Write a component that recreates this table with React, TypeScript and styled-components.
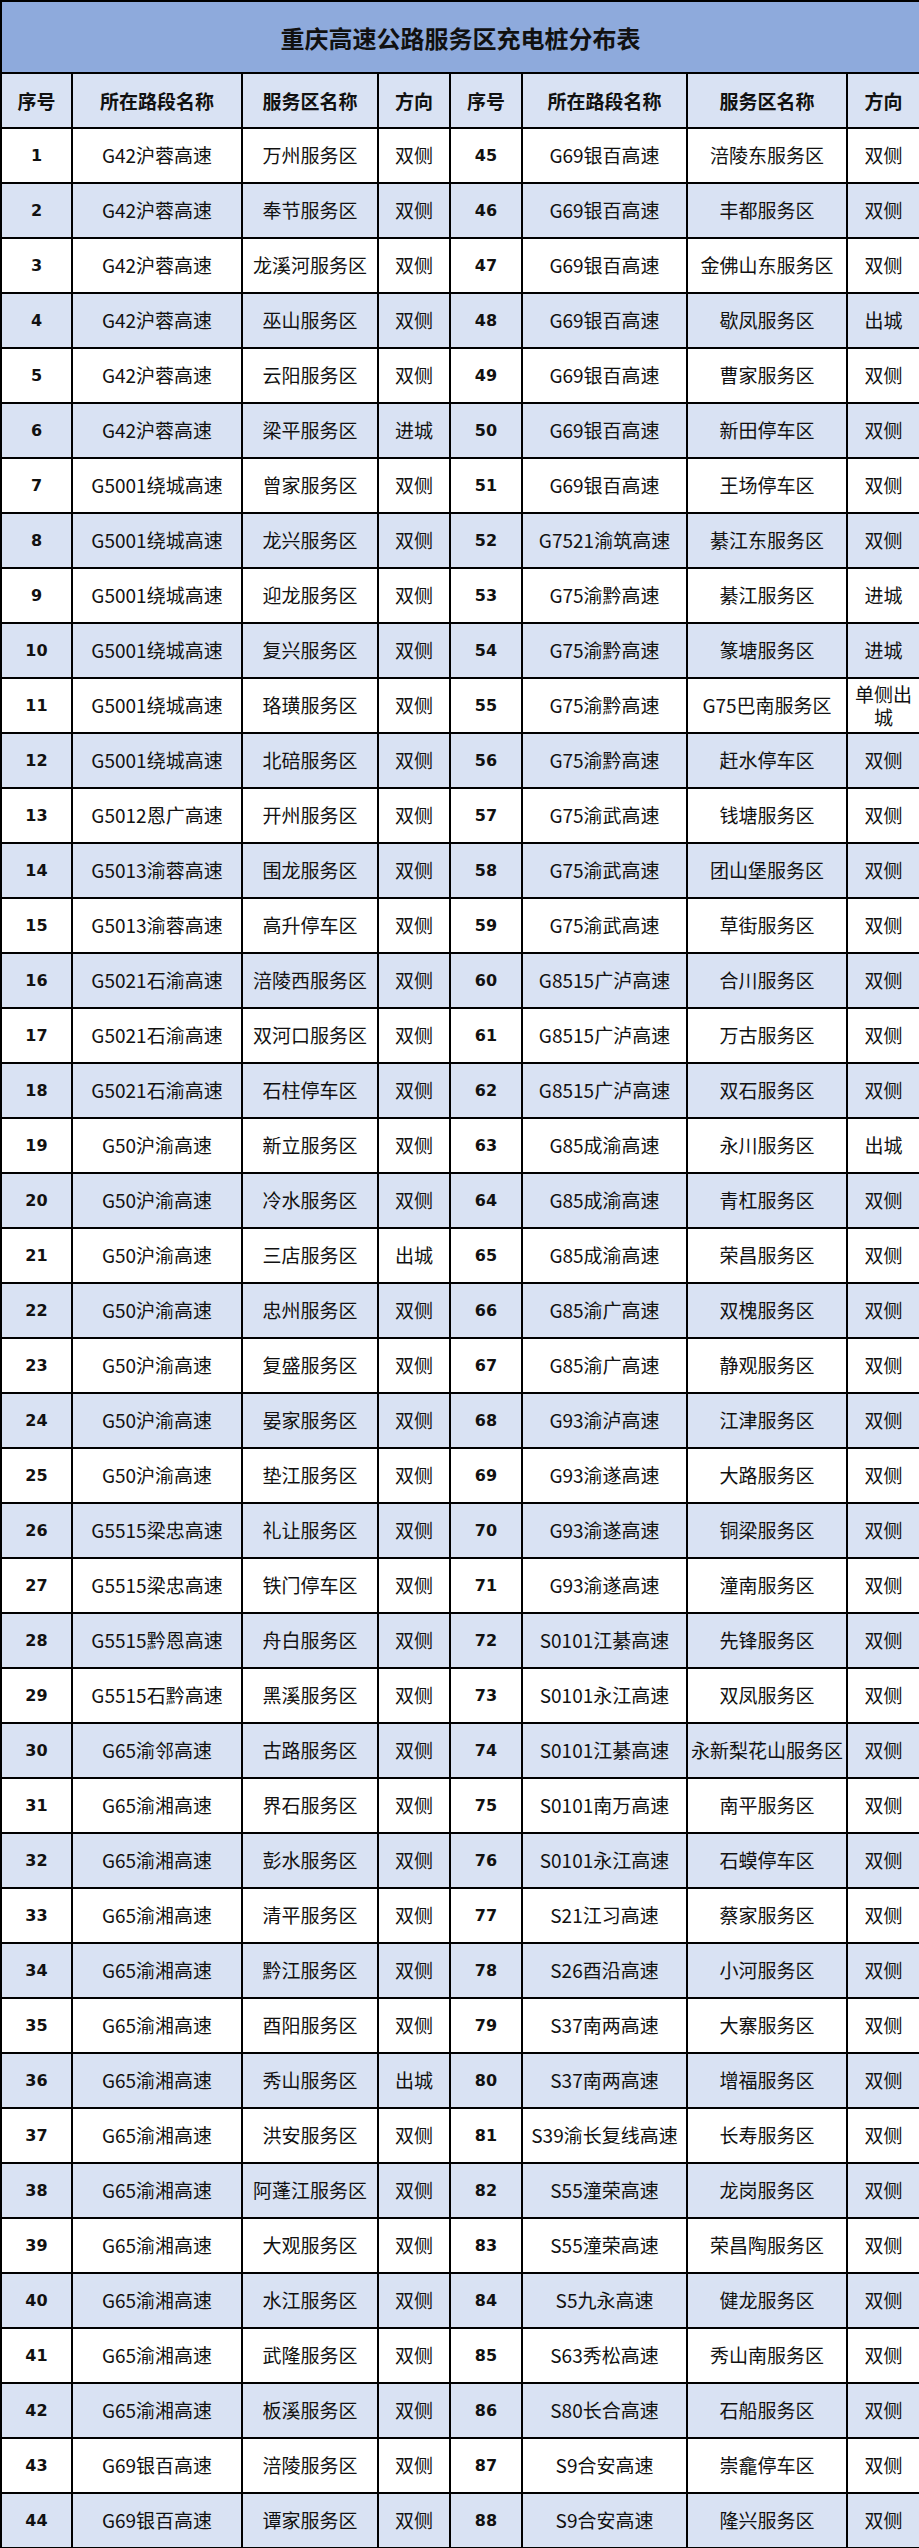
import React from 'react';
import styled, { createGlobalStyle } from 'styled-components';

type Row = [number, string, string, string];

const LEFT_ROWS: Row[] = [
  [1, 'G42沪蓉高速', '万州服务区', '双侧'],
  [2, 'G42沪蓉高速', '奉节服务区', '双侧'],
  [3, 'G42沪蓉高速', '龙溪河服务区', '双侧'],
  [4, 'G42沪蓉高速', '巫山服务区', '双侧'],
  [5, 'G42沪蓉高速', '云阳服务区', '双侧'],
  [6, 'G42沪蓉高速', '梁平服务区', '进城'],
  [7, 'G5001绕城高速', '曾家服务区', '双侧'],
  [8, 'G5001绕城高速', '龙兴服务区', '双侧'],
  [9, 'G5001绕城高速', '迎龙服务区', '双侧'],
  [10, 'G5001绕城高速', '复兴服务区', '双侧'],
  [11, 'G5001绕城高速', '珞璜服务区', '双侧'],
  [12, 'G5001绕城高速', '北碚服务区', '双侧'],
  [13, 'G5012恩广高速', '开州服务区', '双侧'],
  [14, 'G5013渝蓉高速', '围龙服务区', '双侧'],
  [15, 'G5013渝蓉高速', '高升停车区', '双侧'],
  [16, 'G5021石渝高速', '涪陵西服务区', '双侧'],
  [17, 'G5021石渝高速', '双河口服务区', '双侧'],
  [18, 'G5021石渝高速', '石柱停车区', '双侧'],
  [19, 'G50沪渝高速', '新立服务区', '双侧'],
  [20, 'G50沪渝高速', '冷水服务区', '双侧'],
  [21, 'G50沪渝高速', '三店服务区', '出城'],
  [22, 'G50沪渝高速', '忠州服务区', '双侧'],
  [23, 'G50沪渝高速', '复盛服务区', '双侧'],
  [24, 'G50沪渝高速', '晏家服务区', '双侧'],
  [25, 'G50沪渝高速', '垫江服务区', '双侧'],
  [26, 'G5515梁忠高速', '礼让服务区', '双侧'],
  [27, 'G5515梁忠高速', '铁门停车区', '双侧'],
  [28, 'G5515黔恩高速', '舟白服务区', '双侧'],
  [29, 'G5515石黔高速', '黑溪服务区', '双侧'],
  [30, 'G65渝邻高速', '古路服务区', '双侧'],
  [31, 'G65渝湘高速', '界石服务区', '双侧'],
  [32, 'G65渝湘高速', '彭水服务区', '双侧'],
  [33, 'G65渝湘高速', '清平服务区', '双侧'],
  [34, 'G65渝湘高速', '黔江服务区', '双侧'],
  [35, 'G65渝湘高速', '酉阳服务区', '双侧'],
  [36, 'G65渝湘高速', '秀山服务区', '出城'],
  [37, 'G65渝湘高速', '洪安服务区', '双侧'],
  [38, 'G65渝湘高速', '阿蓬江服务区', '双侧'],
  [39, 'G65渝湘高速', '大观服务区', '双侧'],
  [40, 'G65渝湘高速', '水江服务区', '双侧'],
  [41, 'G65渝湘高速', '武隆服务区', '双侧'],
  [42, 'G65渝湘高速', '板溪服务区', '双侧'],
  [43, 'G69银百高速', '涪陵服务区', '双侧'],
  [44, 'G69银百高速', '谭家服务区', '双侧'],
];

const RIGHT_ROWS: Row[] = [
  [45, 'G69银百高速', '涪陵东服务区', '双侧'],
  [46, 'G69银百高速', '丰都服务区', '双侧'],
  [47, 'G69银百高速', '金佛山东服务区', '双侧'],
  [48, 'G69银百高速', '歇凤服务区', '出城'],
  [49, 'G69银百高速', '曹家服务区', '双侧'],
  [50, 'G69银百高速', '新田停车区', '双侧'],
  [51, 'G69银百高速', '王场停车区', '双侧'],
  [52, 'G7521渝筑高速', '綦江东服务区', '双侧'],
  [53, 'G75渝黔高速', '綦江服务区', '进城'],
  [54, 'G75渝黔高速', '篆塘服务区', '进城'],
  [55, 'G75渝黔高速', 'G75巴南服务区', '单侧出城'],
  [56, 'G75渝黔高速', '赶水停车区', '双侧'],
  [57, 'G75渝武高速', '钱塘服务区', '双侧'],
  [58, 'G75渝武高速', '团山堡服务区', '双侧'],
  [59, 'G75渝武高速', '草街服务区', '双侧'],
  [60, 'G8515广泸高速', '合川服务区', '双侧'],
  [61, 'G8515广泸高速', '万古服务区', '双侧'],
  [62, 'G8515广泸高速', '双石服务区', '双侧'],
  [63, 'G85成渝高速', '永川服务区', '出城'],
  [64, 'G85成渝高速', '青杠服务区', '双侧'],
  [65, 'G85成渝高速', '荣昌服务区', '双侧'],
  [66, 'G85渝广高速', '双槐服务区', '双侧'],
  [67, 'G85渝广高速', '静观服务区', '双侧'],
  [68, 'G93渝泸高速', '江津服务区', '双侧'],
  [69, 'G93渝遂高速', '大路服务区', '双侧'],
  [70, 'G93渝遂高速', '铜梁服务区', '双侧'],
  [71, 'G93渝遂高速', '潼南服务区', '双侧'],
  [72, 'S0101江綦高速', '先锋服务区', '双侧'],
  [73, 'S0101永江高速', '双凤服务区', '双侧'],
  [74, 'S0101江綦高速', '永新梨花山服务区', '双侧'],
  [75, 'S0101南万高速', '南平服务区', '双侧'],
  [76, 'S0101永江高速', '石蟆停车区', '双侧'],
  [77, 'S21江习高速', '蔡家服务区', '双侧'],
  [78, 'S26酉沿高速', '小河服务区', '双侧'],
  [79, 'S37南两高速', '大寨服务区', '双侧'],
  [80, 'S37南两高速', '增福服务区', '双侧'],
  [81, 'S39渝长复线高速', '长寿服务区', '双侧'],
  [82, 'S55潼荣高速', '龙岗服务区', '双侧'],
  [83, 'S55潼荣高速', '荣昌陶服务区', '双侧'],
  [84, 'S5九永高速', '健龙服务区', '双侧'],
  [85, 'S63秀松高速', '秀山南服务区', '双侧'],
  [86, 'S80长合高速', '石船服务区', '双侧'],
  [87, 'S9合安高速', '崇龕停车区', '双侧'],
  [88, 'S9合安高速', '隆兴服务区', '双侧'],
];

const COLUMN_WIDTHS = [71, 170, 136, 72, 72, 165, 160, 73];
const HEADERS = ['序号', '所在路段名称', '服务区名称', '方向'];

const GlobalStyle = createGlobalStyle`
  body {
    margin: 0;
    background: #fff;
  }
`;

const Sheet = styled.table`
  width: 919px;
  table-layout: fixed;
  border-collapse: collapse;
  font-family: 'Noto Sans CJK SC', 'Noto Sans', sans-serif;
  color: #111;
`;

const TitleCell = styled.th`
  height: 70px;
  padding: 0;
  border: 2px solid #000;
  background: #8eaadc;
  font-size: 24px;
  font-weight: 700;
  text-align: center;
  vertical-align: middle;
`;

const BodyRow = styled.tr<{ $shaded: boolean }>`
  height: 55px;
  background: ${(props) => (props.$shaded ? '#d9e2f3' : '#fff')};
`;

const HeadCell = styled.th`
  padding: 0 2px;
  border: 2px solid #000;
  font-size: 19px;
  font-weight: 700;
  text-align: center;
  vertical-align: middle;
`;

const NumberCell = styled.td`
  padding: 0;
  border: 2px solid #000;
  font-family: 'DejaVu Sans', Verdana, sans-serif;
  font-size: 16px;
  font-weight: 700;
  text-align: center;
  vertical-align: middle;
`;

const TextCell = styled.td`
  padding: 0 2px;
  border: 2px solid #000;
  font-size: 19px;
  line-height: 1.2;
  text-align: center;
  vertical-align: middle;
`;

const App: React.FC = () => {
  return (
    <>
      <GlobalStyle />
      <Sheet>
        <colgroup>
          {COLUMN_WIDTHS.map((w, i) => (
            <col key={i} style={{ width: w }} />
          ))}
        </colgroup>
        <thead>
          <tr>
            <TitleCell colSpan={8}>重庆高速公路服务区充电桩分布表</TitleCell>
          </tr>
          <BodyRow $shaded>
            {[...HEADERS, ...HEADERS].map((h, i) => (
              <HeadCell key={i}>{h}</HeadCell>
            ))}
          </BodyRow>
        </thead>
        <tbody>
          {LEFT_ROWS.map((left, idx) => {
            const right = RIGHT_ROWS[idx];
            return (
              <BodyRow key={left[0]} $shaded={idx % 2 === 1}>
                <NumberCell>{left[0]}</NumberCell>
                <TextCell>{left[1]}</TextCell>
                <TextCell>{left[2]}</TextCell>
                <TextCell>{left[3]}</TextCell>
                <NumberCell>{right[0]}</NumberCell>
                <TextCell>{right[1]}</TextCell>
                <TextCell>{right[2]}</TextCell>
                <TextCell>{right[3]}</TextCell>
              </BodyRow>
            );
          })}
        </tbody>
      </Sheet>
    </>
  );
};

export default App;
